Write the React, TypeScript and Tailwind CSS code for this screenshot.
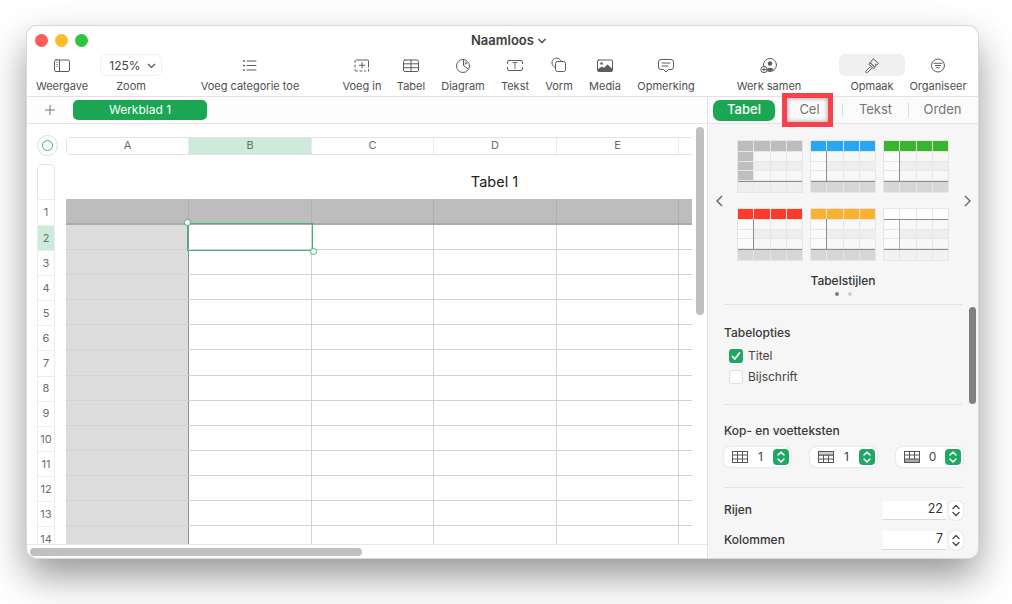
import React from 'react';

const Ic = ({ children }: { children: React.ReactNode }) => (
  <svg width={20} height={20} viewBox="0 0 20 20" className="mt-[1px]" fill="none" stroke="#5c5c5c" strokeWidth="1" strokeLinecap="round" strokeLinejoin="round">
    {children}
  </svg>
);

const icons: Record<string, React.ReactNode> = {
  view: (
    <Ic>
      <rect x="2.500" y="4" width="15" height="11.500" rx="1.500" />
      <path d="M7.500 4v11.500" />
      <path d="M4.500 6.500h1M4.500 8.500h1M4.500 10.500h1" stroke="#9a9a9a" />
    </Ic>
  ),
  list: (
    <Ic>
      <path d="M7 5h9M7 9.500h9M7 14h9" />
      <path d="M3.500 5h.8M3.500 9.500h.8M3.500 14h.8" strokeWidth="1.500" />
    </Ic>
  ),
  insert: (
    <Ic>
      <path d="M5 4h10.500a1 1 0 0 1 1 1v6M3 6.500V5a1 1 0 0 1 1-1M3 9v2M3 13.500v.5a1 1 0 0 0 1 1h1.500M8 15h2M12.500 15h1M16.500 13.500V15" />
      <path d="M10 6.500V12M7.200 9.300h5.500" />
    </Ic>
  ),
  table: (
    <Ic>
      <rect x="2.500" y="4" width="15" height="11.500" rx="1.500" />
      <path d="M2.500 7.800h15M2.500 11.700h15M10 4v11.500" />
    </Ic>
  ),
  chart: (
    <Ic>
      <circle cx="10" cy="10" r="6.500" />
      <path d="M10.500 4v5.500l4.500 3.300" />
      <path d="M12.300 5 14.800 7.500 11.500 9Z" fill="#8a8a8a" stroke="none" />
    </Ic>
  ),
  text: (
    <Ic>
      <path d="M4 4.500h12a1.500 1.500 0 0 1 1.500 1.500v1.500M17.500 11.500V13a1.500 1.500 0 0 1-1.500 1.500H4A1.500 1.500 0 0 1 2.500 13v-1.500M2.500 7.500V6A1.500 1.500 0 0 1 4 4.500" />
      <text x="10" y="13" textAnchor="middle" fontSize="9" fill="#5c5c5c" stroke="none" fontFamily="Inter">T</text>
    </Ic>
  ),
  shape: (
    <Ic>
      <path d="M6.500 11.500a4.800 4.800 0 1 1 5.800-6" />
      <rect x="6.500" y="5.500" width="10" height="10" rx="2" />
    </Ic>
  ),
  media: (
    <Ic>
      <rect x="2.500" y="4" width="15" height="11.500" rx="1" />
      <circle cx="6.500" cy="7.500" r="1.300" fill="#5c5c5c" stroke="none" />
      <path d="M3 15v-2l4-2.500 2 1.300 3.500-3.300 5 4.500v2Z" fill="#5c5c5c" stroke="none" />
    </Ic>
  ),
  comment: (
    <Ic>
      <path d="M5 3.500h10a2.500 2.500 0 0 1 2.500 2.500v5A2.500 2.500 0 0 1 15 13.500h-2.500L10 16l-2.500-2.500H5A2.500 2.500 0 0 1 2.500 11V6A2.500 2.500 0 0 1 5 3.500Z" />
      <path d="M6 7h8M6 10h6" />
    </Ic>
  ),
  collab: (
    <Ic>
      <circle cx="11" cy="9" r="6.500" />
      <circle cx="11" cy="7.500" r="2.200" fill="#5c5c5c" stroke="none" />
      <path d="M7.500 14c.5-3 6.500-3 7 0a6.500 6.500 0 0 1-7 0Z" fill="#5c5c5c" stroke="none" />
      <circle cx="5" cy="13.500" r="3.200" fill="#ffffff" />
      <path d="M5 11.900v3.200M3.400 13.500h3.200" />
    </Ic>
  ),
  brush: (
    <Ic>
      <path d="M11.500 3 16.500 7.500l-1.800 1.500-1.200-.8.500 1.500-1.500 1.300-4-4Z" />
      <path d="M8.500 7 13 11.500l-1.500 1.300L7 8.300Z" />
      <path d="M8.500 10.500 4 15a1 1 0 0 0 1.500 1.500l4.500-4.500" />
    </Ic>
  ),
  organize: (
    <Ic>
      <circle cx="10" cy="9.500" r="6.500" />
      <path d="M6 7.300h8M7.300 9.500h5.400M8.600 11.700h2.800" />
    </Ic>
  ),
};

const tools = [
  { label: 'Weergave', icon: 'view', w: 'w-[70px]' },
  { label: 'Zoom', w: 'w-[68px]' },
  { label: 'Voeg categorie toe', icon: 'list', w: 'w-[170px]' },
  { label: 'Voeg in', icon: 'insert', w: 'w-[54px]' },
  { label: 'Tabel', icon: 'table', w: 'w-[44px]' },
  { label: 'Diagram', icon: 'chart', w: 'w-[60px]' },
  { label: 'Tekst', icon: 'text', w: 'w-[44px]' },
  { label: 'Vorm', icon: 'shape', w: 'w-[44px]' },
  { label: 'Media', icon: 'media', w: 'w-[48px]' },
  { label: 'Opmerking', icon: 'comment', w: 'w-[74px]' },
  { label: 'Werk samen', icon: 'collab', w: 'w-[132px]' },
  { label: 'Opmaak', icon: 'brush', w: 'w-[74px]', active: true },
  { label: 'Organiseer', icon: 'organize', w: 'w-[58px]' },
];

const columns = ['A', 'B', 'C', 'D', 'E', ''];
const headWidths = ['w-[122px]', 'w-[123px]', 'w-[122px]', 'w-[123px]', 'w-[122px]', 'w-[13px]'];
const colWidths = ['w-[123px]', 'w-[123px]', 'w-[122px]', 'w-[123px]', 'w-[122px]', 'w-[13px]'];
const rows = Array.from({ length: 14 }, (_, i) => i + 1);

const Toolbar = () => (
  <div className="h-[71px] shrink-0 border-b border-[#e2e2e2] bg-white">
    <div className="flex h-[28px] items-center pl-[8px] pt-[1px]">
      <div className="flex gap-[7px]">
        <div className="h-[13px] w-[13px] rounded-full bg-[#fc5b57]" />
        <div className="h-[13px] w-[13px] rounded-full bg-[#febb2e]" />
        <div className="h-[13px] w-[13px] rounded-full bg-[#2ac73f]" />
      </div>
      <div className="ml-[383px] text-[13px] font-semibold text-[#3e3e3e]">Naamloos</div>
      <svg width="10" height="8" viewBox="0 0 10 8" className="ml-[3px]" fill="none" stroke="#444" strokeWidth="1.300">
        <path d="M1.500 2 5 5.500 8.500 2" />
      </svg>
    </div>
    <div className="flex">
      {tools.map((t) => (
        <div key={t.label} className={`flex flex-col items-center ${t.w}`}>
          {t.label === 'Zoom' ? (
            <div className="flex h-[22px] w-[62px] items-center justify-center gap-[6px] rounded-[6px] border border-[#f0f0f0] pl-[3px] pt-[1px] text-[12px] text-[#444]">
              125%
              <svg width="9" height="6" viewBox="0 0 9 6" fill="none" stroke="#555" strokeWidth="1.200">
                <path d="M1 1 4.500 4.500 8 1" />
              </svg>
            </div>
          ) : (
            <div className={`flex h-[22px] items-center justify-center rounded-[6px] ${t.active ? 'w-[66px] bg-[#f0f0f0]' : 'w-[30px]'}`}>
              {icons[t.icon as string]}
            </div>
          )}
          <div className="mt-[3px] h-[14px] whitespace-nowrap text-[11px] leading-[14px] text-[#4f4f4f]">{t.label}</div>
        </div>
      ))}
    </div>
  </div>
);

const Handle = ({ className }: { className: string }) => (
  <div className={`absolute h-[7px] w-[7px] rounded-full border-[1.500px] border-[#3fb573] bg-white ${className}`} />
);

const Sheet = () => (
  <div className="flex h-[420px] flex-col overflow-hidden bg-white pl-[10px] pt-[11px]">
    <div className="flex h-[21px] shrink-0 items-center gap-[8px]">
      <div className="flex h-[21px] w-[21px] shrink-0 items-center justify-center rounded-full border border-[#dcdcdc]">
        <div className="h-[11px] w-[11px] rounded-full border-[1.500px] border-[#3fb573]" />
      </div>
      <div className="flex h-[18px] w-[626px] rounded-l-[4px] border border-r-0 border-[#e4e4e4] text-[11px] text-[#6b6b6b]">
        {columns.map((c, i) => (
          <div
            key={i}
            className={`flex items-center justify-center ${i < 5 ? 'border-r border-[#eaeaea]' : ''} ${headWidths[i]} ${c === 'B' ? 'bg-[#cdebda]' : 'bg-white'}`}
          >
            {c}
          </div>
        ))}
      </div>
    </div>
    <div className="mt-[8px] flex gap-[11px]">
      <div className="w-[18px] shrink-0">
        <div className="h-[35px] rounded-t-[5px] border border-b-0 border-[#e6e6e6]" />
        {rows.map((r) => (
          <div
            key={r}
            className={`flex items-center justify-center border-x border-t border-[#ececec] text-[11px] text-[#6b6b6b] ${r === 1 ? 'h-[26px]' : 'h-[25.100px]'} ${r === 2 ? 'bg-[#cdebda]' : 'bg-white'}`}
          >
            {r}
          </div>
        ))}
      </div>
      <div className="w-[626px] overflow-hidden">
        <div className="flex h-[35px] w-[857px] items-center justify-center pt-[1px] text-[14.500px] text-[#222]">Tabel 1</div>
        <div className="relative">
          {rows.map((r) => (
            <div key={r} className={`flex ${r === 1 ? 'h-[26px] border-b-2 border-[#a8a9a8] bg-[#bcbdbc]' : 'h-[25.100px] border-b border-[#d2d2d2] bg-white'}`}>
              {colWidths.map((w, i) => (
                <div
                  key={i}
                  className={`${w} ${i === 5 ? '' : r === 1 ? 'border-r border-[#adaead]' : i === 0 ? 'border-r border-[#8c8c8c] bg-[#dcdcdc]' : 'border-r border-[#d2d2d2]'}`}
                />
              ))}
            </div>
          ))}
          {/* selected cell */}
          <div className="absolute left-[121px] top-[24px] h-[28px] w-[126px] border-[1.500px] border-[#3fb573]" />
          <Handle className="left-[118px] top-[20px]" />
          <Handle className="left-[244px] top-[49px]" />
        </div>
      </div>
    </div>
  </div>
);

const Thumb = ({ head, plain, gray }: { head: string; plain?: boolean; gray?: boolean }) => (
  <div className="relative grid h-[51px] w-[64px] grid-cols-4 grid-rows-[10px_1fr_1fr_1fr_11px] gap-px bg-[#e6e6e6] shadow-[0_0_0_1px_#e6e6e6]">
    {[0, 1, 2, 3, 4].map((r) =>
      [0, 1, 2, 3].map((c) => {
        let bg = r % 2 === 0 ? '#eeeeee' : '#f7f7f7';
        if (r === 0) bg = head;
        else if (r === 4) bg = gray ? '#efefef' : plain ? '#f2f2f2' : '#d6d6d6';
        else if (c === 0) bg = gray ? '#bfbfbf' : '#fbfbfb';
        return <div key={`${r}-${c}`} style={{ backgroundColor: bg }} />;
      }),
    )}
    {/* heavier rules on top of the cells */}
    {!gray && <div className={`absolute left-[15px] w-px bg-[#8d8d8d] ${plain ? 'bottom-[11px] top-[11px] opacity-60' : 'bottom-[11px] top-[10px]'}`} />}
    <div className="absolute bottom-[10px] left-0 right-0 h-px bg-[#8d8d8d]" />
    {plain && <div className="absolute left-0 right-0 top-[10px] h-px bg-[#8d8d8d]" />}
  </div>
);

const Updown = ({ color = '#ffffff', size = 'h-[14px] w-[10px]' }: { color?: string; size?: string }) => (
  <svg viewBox="0 0 10 14" className={size} fill="none" stroke={color} strokeWidth="1.500" strokeLinecap="round" strokeLinejoin="round">
    <path d="M2 5 5 2l3 3M2 9l3 3 3-3" />
  </svg>
);

const HeaderIcon = ({ kind }: { kind: number }) => (
  <svg width="16" height="12" viewBox="0 0 16 12" fill="none" stroke="#555" strokeWidth="1">
    <rect x="0.500" y="0.500" width="15" height="11" />
    {kind === 0 && <path d="M.5 4h15M.5 8h15M5.500.5v11M10.500.5v11" />}
    {kind === 1 && <path d="M.5 4h15M.5 8h15M5.500 4v7.500M10.500 4v7.500" />}
    {kind === 1 && <rect x="0.500" y="0.500" width="15" height="3.500" fill="#cfcfcf" />}
    {kind === 2 && <path d="M.5 4h15M5.500.5V8M10.500.5V8" />}
    {kind === 2 && <rect x="0.500" y="8" width="15" height="3.500" fill="#a9a9a9" />}
  </svg>
);

const HeaderStepper = ({ kind, value }: { kind: number; value: number }) => (
  <div className="flex h-[20px] w-[67px] items-center rounded-[6px] bg-white pl-[8px] pr-[2px] shadow-[0_0_2px_rgba(0,0,0,0.18)]">
    <HeaderIcon kind={kind} />
    <div className="flex-1 text-center text-[12px] text-[#444]">{value}</div>
    <div className="flex h-[16px] w-[16px] items-center justify-center rounded-[4px] bg-[#1fa863]">
      <Updown />
    </div>
  </div>
);

const NumberRow = ({ label, value }: { label: string; value: number }) => (
  <div className="flex h-[20px] items-center">
    <div className="flex-1 text-[12px] font-medium text-[#383838]">{label}</div>
    <div className="flex h-[19px] w-[63px] items-center justify-end border-b border-[#d8d8d8] bg-white pr-[3px] text-[12.500px] text-[#333]">{value}</div>
    <div className="ml-[3px] flex h-[19px] w-[14px] items-center justify-center rounded-[5px] bg-white shadow-[0_0_1px_rgba(0,0,0,0.35)]">
      <Updown color="#555" size="h-[15px] w-[10px]" />
    </div>
  </div>
);

const Sidebar = () => (
  <div className="relative flex w-[271px] shrink-0 flex-col border-l border-[#e2e2e2] bg-[#f6f6f6]">
    <div className="flex h-[27px] shrink-0 items-center border-b border-[#e4e4e4] bg-[#fbfbfb] pl-[5px] text-[13px] text-[#757575]">
      <div className="flex h-[21px] w-[62px] items-center justify-center rounded-[7px] bg-[#1aa653] font-medium text-white">Tabel</div>
      <div className="relative flex h-full w-[67px] items-center justify-center pl-[2px]">
        Cel
        <div className="absolute -bottom-[4px] left-[7px] -top-[4px] right-[9px] border-[5px] border-[#f8414a] shadow-[inset_0_0_5px_rgba(0,0,0,0.4)]" />
      </div>
      <div className="h-[14px] w-px bg-[#dcdcdc]" />
      <div className="w-[65px] text-center">Tekst</div>
      <div className="h-[14px] w-px bg-[#dcdcdc]" />
      <div className="w-[67px] text-center">Orden</div>
    </div>

    <div className="flex items-center pt-[17px]">
      <div className="flex w-[30px] justify-center pr-[8px]">
        <svg width="9" height="14" viewBox="0 0 9 14" fill="none" stroke="#666" strokeWidth="1.400">
          <path d="M7 2 2 7l5 5" />
        </svg>
      </div>
      <div className="grid grid-cols-[64px_64px_64px] gap-x-[9px] gap-y-[17px]">
        <Thumb head="#bcbdbc" gray />
        <Thumb head="#27a8f5" />
        <Thumb head="#38b52c" />
        <Thumb head="#fc3b2a" />
        <Thumb head="#fbb02f" />
        <Thumb head="#ffffff" plain />
      </div>
      <div className="flex flex-1 justify-end pr-[6px]">
        <svg width="9" height="14" viewBox="0 0 9 14" fill="none" stroke="#666" strokeWidth="1.400">
          <path d="m2 2 5 5-5 5" />
        </svg>
      </div>
    </div>
    <div className="mt-[13px] text-center text-[12px] font-medium leading-[16px] text-[#333]">Tabelstijlen</div>
    <div className="mt-[3px] flex justify-center gap-[9px]">
      <div className="h-[4px] w-[4px] rounded-full bg-[#7d7d7d]" />
      <div className="h-[4px] w-[4px] rounded-full bg-[#cfcfcf]" />
    </div>

    <div className="mx-[16px] mt-[8px] border-b border-[#e2e2e2]" />
    <div className="mx-[16px] h-[100px] border-b border-[#e2e2e2] pt-[20px]">
      <div className="text-[12px] font-medium leading-[16px] text-[#383838]">Tabelopties</div>
      <div className="mt-[7px] flex h-[15px] items-center gap-[5px] pl-[5px] text-[12px] text-[#444]">
        <div className="flex h-[14px] w-[14px] items-center justify-center rounded-[3px] bg-[#1fa863]">
          <svg width="10" height="10" viewBox="0 0 10 10" fill="none" stroke="#fff" strokeWidth="1.800" strokeLinecap="round" strokeLinejoin="round">
            <path d="m1.500 5.500 2.300 2.500 4.700-6" />
          </svg>
        </div>
        Titel
      </div>
      <div className="mt-[7px] flex h-[14px] items-center gap-[5px] pl-[5px] text-[12px] text-[#444]">
        <div className="h-[14px] w-[14px] rounded-[3px] border border-[#dedede] bg-white" />
        Bijschrift
      </div>
    </div>
    <div className="ml-[16px] mr-[15px] h-[83px] border-b border-[#e2e2e2] pt-[18px]">
      <div className="text-[12px] font-medium leading-[16px] text-[#383838]">Kop- en voetteksten</div>
      <div className="mt-[8px] flex justify-between">
        <HeaderStepper kind={0} value={1} />
        <HeaderStepper kind={1} value={1} />
        <HeaderStepper kind={2} value={0} />
      </div>
    </div>
    <div className="ml-[16px] mr-[15px] flex flex-col gap-[10px] pt-[12px]">
      <NumberRow label="Rijen" value={22} />
      <NumberRow label="Kolommen" value={7} />
    </div>
    {/* overlay scrollbar */}
    <div className="absolute left-[261px] top-[210px] h-[97px] w-[7px] rounded-full bg-[#7f7f7f]" />
  </div>
);

export default function App() {
  return (
    <div className="h-[604px] w-[1012px] overflow-hidden bg-white pl-[27px] pt-[26px] font-['Inter',sans-serif]">
      <div className="flex h-[532px] w-[951px] flex-col overflow-hidden rounded-[10px] bg-white shadow-[0_0_0_1px_#d8d8d8,0_18px_38px_rgba(0,0,0,0.42)]">
        <Toolbar />
        <div className="flex min-h-0 flex-1">
          <div className="flex w-[680px] shrink-0 flex-col">
            <div className="flex h-[27px] shrink-0 items-center border-b border-[#e6e6e6] bg-[#fdfdfd]">
              <div className="flex w-[46px] justify-center">
                <svg width="12" height="12" viewBox="0 0 12 12" stroke="#777" strokeWidth="1">
                  <path d="M6 1v10M1 6h10" />
                </svg>
              </div>
              <div className="flex h-[20px] w-[134px] items-center justify-center rounded-[5px] bg-[#1aa653] text-[12px] text-white">Werkblad 1</div>
            </div>
            <div className="flex">
              <div className="w-[665px]">
                <Sheet />
              </div>
              <div className="w-[15px] pl-[4px] pt-[3px]">
                <div className="h-[188px] w-[8px] rounded-full bg-[#c0c0c0]" />
              </div>
            </div>
            <div className="flex-1 border-t border-[#e8e8e8] pl-[3px] pt-[3px]">
              <div className="h-[8px] w-[332px] rounded-full bg-[#c0c0c0]" />
            </div>
          </div>
          <Sidebar />
        </div>
      </div>
    </div>
  );
}
